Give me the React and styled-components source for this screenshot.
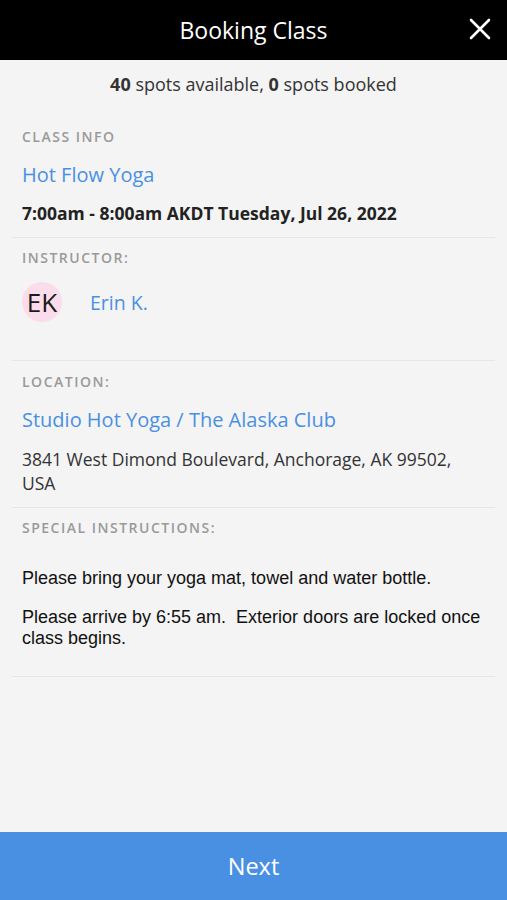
import styled, { createGlobalStyle } from "styled-components";

const GlobalStyle = createGlobalStyle`
  html, body {
    margin: 0;
    padding: 0;
    background: #f4f4f4;
  }
  * {
    box-sizing: border-box;
  }
`;

const Page = styled.div`
  display: flex;
  flex-direction: column;
  height: 900px;
  width: 100%;
  background: #f4f4f4;
  font-family: "Open Sans", "Liberation Sans", sans-serif;
`;

const Header = styled.header`
  position: relative;
  display: flex;
  align-items: center;
  justify-content: center;
  height: 60px;
  background: #000;
  color: #fff;
  font-size: 23px;
`;

const CloseButton = styled.button`
  position: absolute;
  right: 14px;
  top: 16px;
  width: 26px;
  height: 26px;
  padding: 0;
  border: none;
  background: none;
  cursor: pointer;
`;

const Content = styled.main`
  flex: 1;
`;

const Spots = styled.div`
  padding: 12px 0;
  line-height: 24px;
  font-size: 18px;
  color: #333;
  text-align: center;

  b {
    font-weight: 700;
  }
`;

const Section = styled.section`
  margin: 0 12px;
  padding: ${({ $top }) => $top}px 10px ${({ $bottom }) => $bottom}px;
  border-bottom: 1px solid #e6e6e6;
`;

const Label = styled.div`
  font-size: 14px;
  line-height: 20px;
  font-weight: 600;
  letter-spacing: 1.5px;
  color: #9a9a9a;
  text-transform: uppercase;
`;

const LinkTitle = styled.div`
  margin-top: ${({ $gap }) => $gap}px;
  font-size: 20px;
  line-height: 26px;
  color: #4a90e2;
`;

const TimeLine = styled.div`
  margin-top: 13px;
  font-size: 17.5px;
  line-height: 24px;
  font-weight: 700;
  color: #222;
`;

const Instructor = styled.div`
  display: flex;
  align-items: center;
  gap: 28px;
  margin-top: 14px;
`;

const Avatar = styled.div`
  display: flex;
  align-items: center;
  justify-content: center;
  width: 40px;
  height: 40px;
  border-radius: 50%;
  background: #fbdceb;
  font-size: 26px;
  color: #1a1a1a;
`;

const InstructorName = styled.span`
  font-size: 19.5px;
  color: #4a90e2;
`;

const Address = styled.div`
  margin-top: 14px;
  font-size: 17.5px;
  line-height: 24px;
  color: #333;
`;

const Instructions = styled.div`
  margin-top: 30px;
  font-family: "Liberation Sans", Arial, sans-serif;
  font-size: 18px;
  line-height: 21px;
  color: #111;

  p {
    margin: 0 0 18px;
  }
  p:last-child {
    margin-bottom: 0;
  }
`;

const NextButton = styled.button`
  height: 68px;
  width: 100%;
  border: none;
  background: #4a90e2;
  color: #fff;
  font-family: "Open Sans", "Liberation Sans", sans-serif;
  font-size: 23.5px;
  cursor: pointer;
`;

export default function App() {
  return (
    <Page>
      <GlobalStyle />
      <Header>
        Booking Class
        <CloseButton aria-label="Close">
          <svg width="26" height="26" viewBox="0 0 26 26">
            <path
              d="M4 4 L22 22 M22 4 L4 22"
              stroke="#fff"
              strokeWidth="2.6"
              strokeLinecap="round"
            />
          </svg>
        </CloseButton>
      </Header>
      <Content>
        <Spots>
          <b>40</b> spots available, <b>0</b> spots booked
        </Spots>
        <Section $top={19} $bottom={12}>
          <Label>Class Info</Label>
          <LinkTitle $gap={15}>Hot Flow Yoga</LinkTitle>
          <TimeLine>7:00am - 8:00am AKDT Tuesday, Jul 26, 2022</TimeLine>
        </Section>
        <Section $top={10} $bottom={38}>
          <Label>Instructor:</Label>
          <Instructor>
            <Avatar>EK</Avatar>
            <InstructorName>Erin K.</InstructorName>
          </Instructor>
        </Section>
        <Section $top={11} $bottom={12}>
          <Label>Location:</Label>
          <LinkTitle $gap={15}>Studio Hot Yoga / The Alaska Club</LinkTitle>
          <Address>
            3841 West Dimond Boulevard, Anchorage, AK 99502,
            <br />
            USA
          </Address>
        </Section>
        <Section $top={10} $bottom={27}>
          <Label>Special Instructions:</Label>
          <Instructions>
            <p>Please bring your yoga mat, towel and water bottle.</p>
            <p>
              Please arrive by 6:55 am.&nbsp; Exterior doors are locked once
              class begins.
            </p>
          </Instructions>
        </Section>
      </Content>
      <NextButton>Next</NextButton>
    </Page>
  );
}
